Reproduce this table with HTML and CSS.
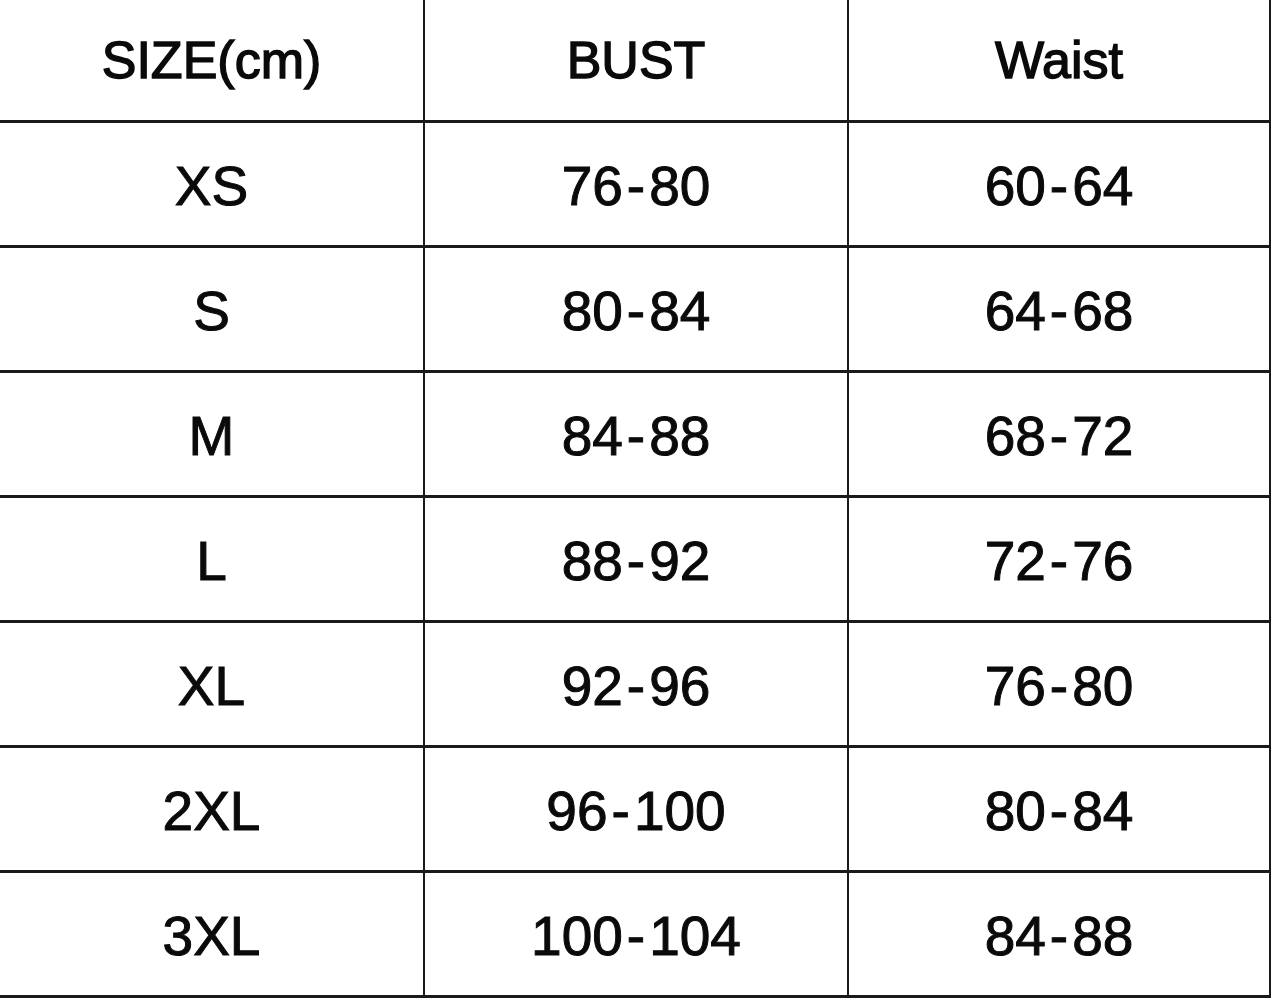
FILE: index.html
```html
<!DOCTYPE html>
<html>
<head>
<meta charset="utf-8">
<link rel="stylesheet" href="styles.css">
</head>
<body>
<div class="chart">
  <div class="row head"><div class="cell">SIZE(cm)</div><div class="cell">BUST</div><div class="cell">Waist</div></div>
  <div class="row"><div class="cell">XS</div><div class="cell">76<span class="dash">-</span>80</div><div class="cell">60<span class="dash">-</span>64</div></div>
  <div class="row"><div class="cell">S</div><div class="cell">80<span class="dash">-</span>84</div><div class="cell">64<span class="dash">-</span>68</div></div>
  <div class="row"><div class="cell">M</div><div class="cell">84<span class="dash">-</span>88</div><div class="cell">68<span class="dash">-</span>72</div></div>
  <div class="row"><div class="cell">L</div><div class="cell">88<span class="dash">-</span>92</div><div class="cell">72<span class="dash">-</span>76</div></div>
  <div class="row"><div class="cell">XL</div><div class="cell">92<span class="dash">-</span>96</div><div class="cell">76<span class="dash">-</span>80</div></div>
  <div class="row"><div class="cell">2XL</div><div class="cell">96<span class="dash">-</span>100</div><div class="cell">80<span class="dash">-</span>84</div></div>
  <div class="row"><div class="cell">3XL</div><div class="cell">100<span class="dash">-</span>104</div><div class="cell">84<span class="dash">-</span>88</div></div>
</div>
</body>
</html>
```
FILE: styles.css
```css
html, body {
  margin: 0;
  padding: 0;
  background: #fff;
}
.chart {
  width: 1271px;
  font-family: "Liberation Sans", Arial, sans-serif;
  color: #0a0a0a;
}
.row {
  display: grid;
  grid-template-columns: 425px 424px 422px;
  height: 125px;
  border-bottom: 3px solid #1a1a1a;
  box-sizing: border-box;
}
.row.head {
  height: 123px;
}
.cell {
  display: flex;
  align-items: center;
  justify-content: center;
  border-right: 2px solid #1a1a1a;
  font-size: 55px;
  padding-top: 3px;
  -webkit-text-stroke: 1px #0a0a0a;
}
.dash {
  margin: 0 4px;
}
.head .cell {
  font-size: 52px;
  padding-top: 0;
  -webkit-text-stroke: 1.4px #0a0a0a;
}
```
